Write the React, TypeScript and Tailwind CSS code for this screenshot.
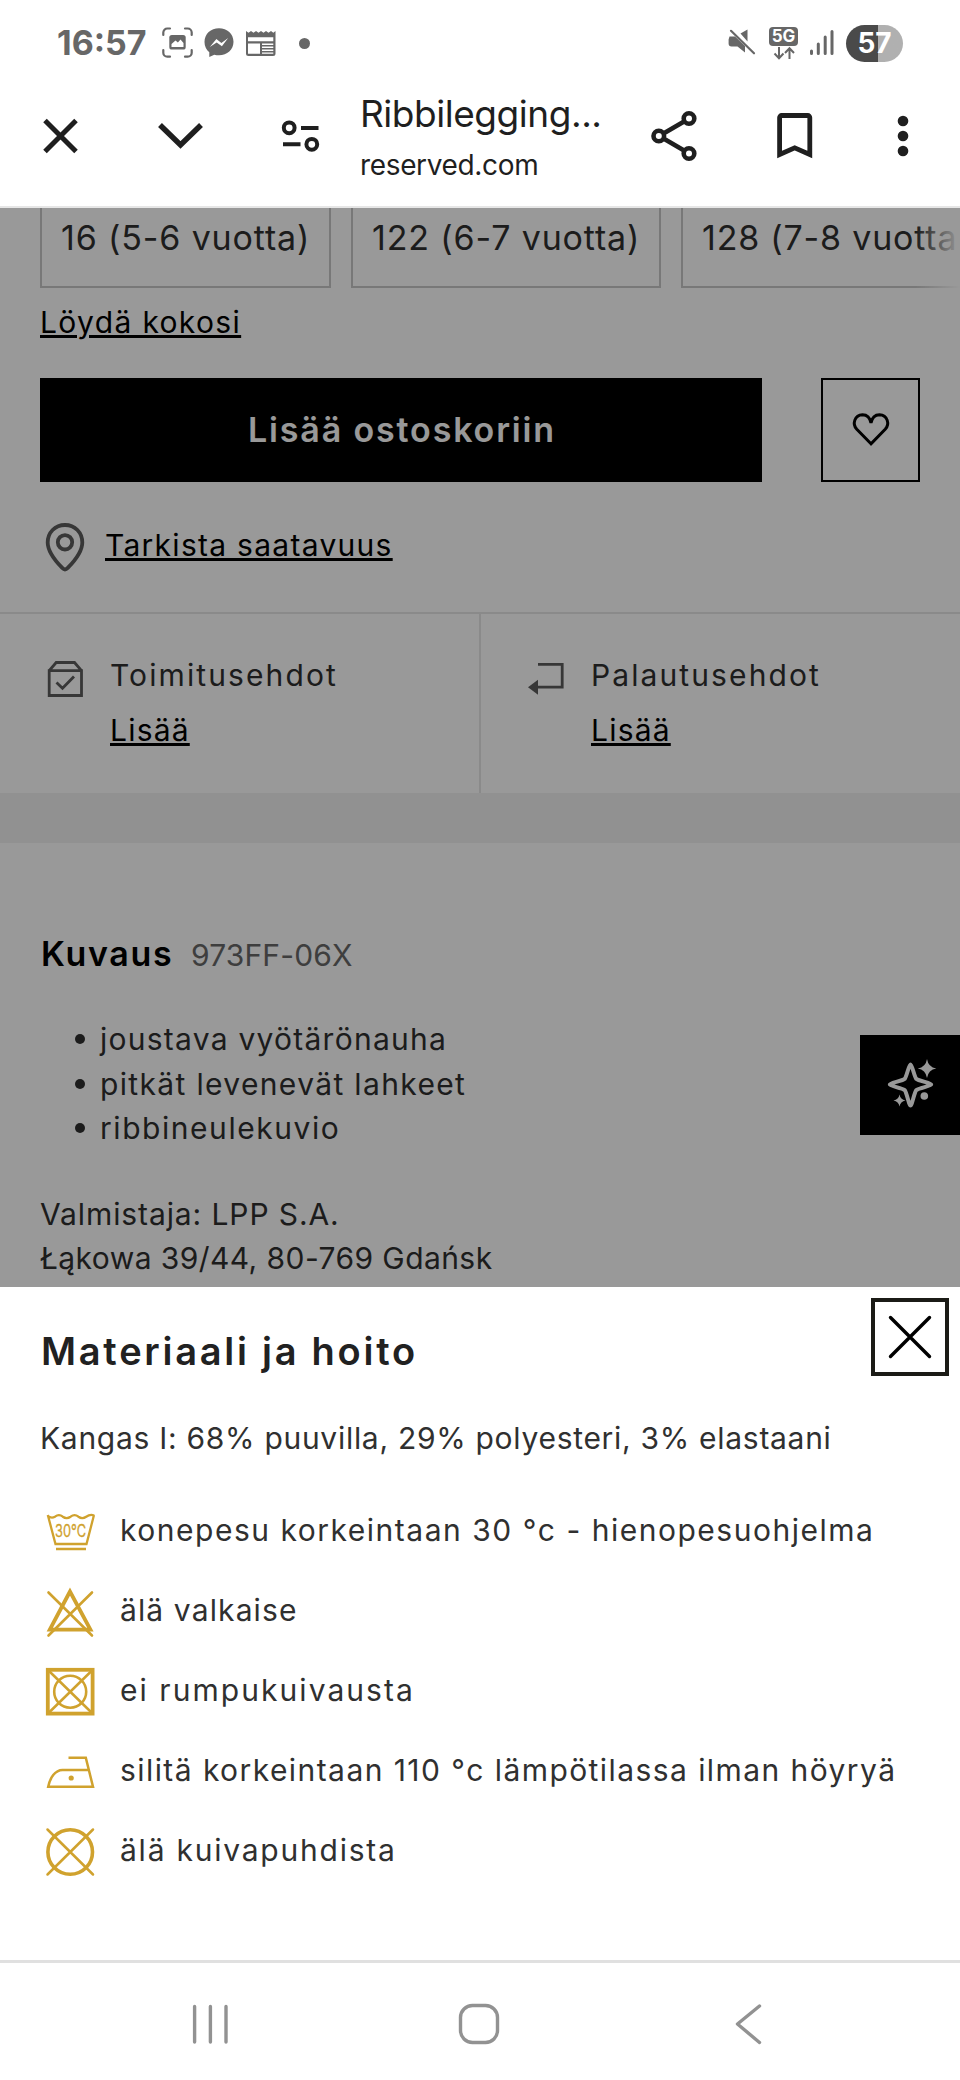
import type { ReactNode } from 'react'

type CareItem = {
  label: string
  tracking: string
  icon: ReactNode
}

function StatusBar() {
  return (
    <div className="flex h-[86px] items-center text-[#676767]">
      <span className="ml-[57px] w-[105px] text-[34px] leading-[36px] font-bold">16:57</span>

      <svg className="h-8 w-8" viewBox="0 0 32 32" fill="none">
        <g stroke="currentColor" strokeWidth="2.2" strokeLinecap="round">
          <path d="M1.3 8V5.5a4 4 0 0 1 4-4H8M23 1.5h2.7a4 4 0 0 1 4 4V8M29.7 23v2.7a4 4 0 0 1-4 4H23M8 29.7H5.3a4 4 0 0 1-4-4V23" />
        </g>
        <rect x="7.3" y="8" width="16.4" height="14.5" rx="2.6" fill="currentColor" />
        <path d="M9.5 20v-3l4-3.6 2.4 2.2 2.6-3.2 3 3.6v4z" fill="#fff" />
      </svg>

      <svg className="ml-[10px] h-8 w-8" viewBox="0 0 32 32">
        <path
          d="M15 1.3C6.8 1.3.5 7 .5 15c0 4.2 1.8 7.7 4.8 10.2V30l5-2.3c1.5.4 3.1.6 4.7.6 8.2 0 14.5-5.7 14.5-13.5S23.2 1.3 15 1.3z"
          fill="currentColor"
        />
        <path d="M5.8 20l6.600-8 5 3.900 6.800-4.800-6.300 8.200-5.200-3.900z" fill="#fff" />
      </svg>

      <svg className="ml-[10px] h-8 w-8" viewBox="0 0 32 32">
        <path
          d="M0 4l2.5 1.8L5 4l2.5 1.8L10 4l2.5 1.8L15 4l2.5 1.8L20 4l2.5 1.8L25 4l2.3 1.8L29.5 4v22.500a2.500 2.500 0 0 1-2.500 2.500H2.500A2.500 2.500 0 0 1 0 26.500z"
          fill="currentColor"
        />
        <path d="M2 10.300h25.300v4H2zM2 16.500h12v10.300H2zM16 16.500h11.300v1.500H16zM16 19.600h11.300v1.500H16zM16 22.600h11.300v1.500H16zM16 25.500h11.300v1.300H16z" fill="#fff" />
      </svg>

      <span className="ml-[21px] h-[11px] w-[11px] rounded-full bg-[#676767]" />

      <svg className="ml-[418px] h-8 w-8" viewBox="0 0 32 32">
        <path d="M1.5 9.5h5.5L17 19v6.5L9.500 19.500h-6A3 3 0 0 1 .6 16.500v-4zM12.500 6.500L19.500 2.500v12z" fill="currentColor" />
        <path d="M5 2.8l21 21" stroke="#fff" strokeWidth="2.5" />
        <path d="M3 3.8l23 22.5" stroke="currentColor" strokeWidth="2.2" strokeLinecap="round" />
      </svg>

      <div className="ml-[9px] flex w-[29px] flex-col items-center">
        <span className="h-[19px] w-[29px] rounded-[4px] bg-[#676767] text-center text-[17px] leading-[19px] font-bold text-white">
          5G
        </span>
        <svg className="h-[14px] w-[22px]" viewBox="0 0 22 14" fill="none" stroke="currentColor" strokeWidth="2">
          <path d="M6 1v11M1.5 7.5L6 12.200l4.500-4.700M16.500 13V2.500M12 7l4.500-4.700L21 7" />
        </svg>
      </div>

      <svg className="ml-[11px] h-8 w-[26px]" viewBox="0 0 26 32" stroke="currentColor" strokeWidth="3" strokeLinecap="round">
        <path d="M2.5 24v2.5M9.3 17v9.5M16.200 10v16.500M23 4.500v22" />
      </svg>

      <span className="ml-[11px] flex h-[37px] w-[57px] items-center justify-center rounded-full bg-linear-to-r from-[#4a4a4a] from-56% to-[#b0b0b0] to-56% text-[28px] leading-none font-bold text-white">
        57
      </span>
    </div>
  )
}

function Toolbar() {
  return (
    <div className="flex h-[122px] items-center border-b-2 border-[#e6e6e6] pb-5 text-[#1f1f1f]">
      <svg className="ml-[36px] h-12 w-12" viewBox="0 0 48 48" stroke="currentColor" strokeWidth="5">
        <path d="M9 8.5l31 31M40 8.5l-31 31" />
      </svg>
      <svg className="ml-[72px] h-12 w-12" viewBox="0 0 48 48" fill="none" stroke="currentColor" strokeWidth="5.5">
        <path d="M4 13l20.5 20L45 13" />
      </svg>
      <svg className="ml-[72px] h-12 w-12" viewBox="0 0 48 48" fill="none" stroke="currentColor" strokeWidth="4">
        <circle cx="13.2" cy="15.8" r="5.4" />
        <circle cx="35.8" cy="32.3" r="5.4" />
        <path d="M25 16h17.5M7 32.3h17.5" />
      </svg>
      <div className="ml-[36px] h-[92px] w-[260px]">
        <div className="text-[37px] leading-[48px] tracking-[-0.46px]">Ribbilegging...</div>
        <div className="mt-[10px] text-[28px] leading-[35px] tracking-[-0.35px]">reserved.com</div>
      </div>
      <svg className="ml-[30px] h-[52px] w-12" viewBox="0 0 48 52" fill="none" stroke="currentColor" strokeWidth="4.6">
        <circle cx="39" cy="8.5" r="5.3" />
        <circle cx="8.8" cy="26" r="5.3" />
        <circle cx="39" cy="43.5" r="5.3" />
        <path d="M13.5 23.4L34.5 11.2M13.5 28.6l21 12.2" />
      </svg>
      <svg className="ml-[73px] h-12 w-12" viewBox="0 0 48 48" fill="none" stroke="currentColor" strokeWidth="4.8">
        <path d="M8.6 42.5V5.5a2 2 0 0 1 2-2h26.2a2 2 0 0 1 2 2v37l-15.1-6.7z" />
      </svg>
      <svg className="ml-[60px] h-12 w-12" viewBox="0 0 48 48" fill="currentColor">
        <circle cx="24" cy="9" r="5.3" />
        <circle cx="24" cy="24" r="5.3" />
        <circle cx="24" cy="39" r="5.3" />
      </svg>
    </div>
  )
}

function ProductPage() {
  return (
    <main className="relative h-[1079px] overflow-hidden bg-white text-[30px] leading-[40px] text-[#303030]">
      <div className="relative flex gap-5 pl-10 text-[34px] leading-[60px] whitespace-nowrap">
        <div className="h-20 w-[291px] shrink-0 border-2 border-t-0 border-[#c9c9c9] pl-[19px] tracking-[0.85px]">16 (5-6 vuotta)</div>
        <div className="h-20 w-[310px] shrink-0 border-2 border-t-0 border-[#c9c9c9] pl-[19px] tracking-[0.85px]">122 (6-7 vuotta)</div>
        <div className="h-20 w-[279px] shrink-0 border-b-2 border-l-2 border-[#c9c9c9] pl-[19px] tracking-[0.8px]">128 (7-8 vuotta</div>
        <div className="absolute top-0 right-0 h-20 w-11 bg-linear-to-r from-transparent to-white" />
      </div>

      <a className="mt-[14px] ml-10 block w-fit tracking-[1.35px] text-black underline decoration-3 underline-offset-2">Löydä kokosi</a>

      <div className="mt-9 flex h-[104px] px-10">
        <button className="w-[722px] bg-black pl-[2px] text-[34px] font-semibold tracking-[1.85px] text-white">Lisää ostoskoriin</button>
        <button className="ml-[59px] flex w-[99px] items-center justify-center border-2 border-black">
          <svg className="h-[38px] w-10" viewBox="0 0 40 38" fill="none" stroke="#000" strokeWidth="3">
            <path d="M20 32.8L5.8 18.3C1 13 3.5 4 11.5 3.7c4.6 0 7.5 3 8.5 8.3 1-5.3 3.9-8.3 8.5-8.3 8 .3 10.500 9.300 5.700 14.600z" />
          </svg>
        </button>
      </div>

      <div className="flex h-[130px] items-center pl-[41px]">
        <svg className="h-[54px] w-12" viewBox="0 0 48 54" fill="none" stroke="#5c5c5c" strokeWidth="3.8">
          <path d="M24 49.500c-1.300 0-2-.8-3-1.800C13.500 40 6.700 31.500 6.700 22.500 6.700 12.500 14 5 24 5s17.300 7.500 17.300 17.500c0 9-6.800 17.500-14.300 25.200-1 1-1.700 1.800-3 1.800z" />
          <circle cx="24" cy="22.3" r="7.2" />
        </svg>
        <a className="mb-1 ml-4 tracking-[1.28px] text-black underline decoration-3 underline-offset-2">Tarkista saatavuus</a>
      </div>

      <div className="flex h-[181px] border-t-2 border-[#e6e6e6]">
        <div className="flex w-[481px] border-r-2 border-[#e6e6e6] pt-[41px] pl-[47px]">
          <svg className="mt-[6px] h-9 w-9" viewBox="0 0 36 36" fill="none" stroke="#5c5c5c" strokeWidth="2.8">
            <path d="M2.2 9.7h32.300v24.800H2.200zM2.200 9.700l7-8.200h18.300l7 8.200" />
            <path d="M9.5 21.5l6 5.8L27 15.5" />
          </svg>
          <div className="ml-[27px]">
            <div className="tracking-[2.1px]">Toimitusehdot</div>
            <a className="mt-[15px] block w-fit tracking-[1.2px] text-black underline decoration-3 underline-offset-2">Lisää</a>
          </div>
        </div>
        <div className="flex pt-[41px] pl-[47px]">
          <svg className="mt-[6px] h-9 w-9" viewBox="0 0 36 36" fill="none" stroke="#5c5c5c" strokeWidth="2.8">
            <path d="M10 3.3h24.2v22.9H9" />
            <path d="M0 26.200l10-7.500v15z" fill="#5c5c5c" stroke="none" />
          </svg>
          <div className="ml-[27px]">
            <div className="tracking-[2.1px]">Palautusehdot</div>
            <a className="mt-[15px] block w-fit tracking-[1.2px] text-black underline decoration-3 underline-offset-2">Lisää</a>
          </div>
        </div>
      </div>

      <div className="h-[50px] bg-[#f2f2f2]" />

      <div className="mt-[89px] flex items-baseline pl-[41px] leading-[44px]">
        <h2 className="w-[150px] text-[34px] font-semibold tracking-[1.68px] text-black">Kuvaus</h2>
        <span className="tracking-[0.15px] text-[#686868]">973FF-06X</span>
      </div>

      <ul className="mt-[40px] pl-[75px] leading-[44.5px]">
        <li className="flex items-center gap-[15px] tracking-[1.25px]">
          <span className="h-[10px] w-[10px] rounded-full bg-[#303030]" />
          joustava vyötärönauha
        </li>
        <li className="flex items-center gap-[15px] tracking-[1.35px]">
          <span className="h-[10px] w-[10px] rounded-full bg-[#303030]" />
          pitkät levenevät lahkeet
        </li>
        <li className="flex items-center gap-[15px] tracking-[1.55px]">
          <span className="h-[10px] w-[10px] rounded-full bg-[#303030]" />
          ribbineulekuvio
        </li>
      </ul>

      <div className="mt-[41px] pl-10 leading-[44.5px]">
        <p className="tracking-[0.9px]">Valmistaja: LPP S.A.</p>
        <p className="tracking-[0.43px]">Łąkowa 39/44, 80-769 Gdańsk</p>
      </div>

      <button className="absolute top-[827px] right-0 h-[100px] w-[100px] bg-black">
        <svg className="h-[100px] w-[100px]" viewBox="0 0 100 100" fill="#fff">
          <path
            d="M50.500 29.500c1.500 0 3.700 11.500 5.700 14.300 2.300 2.200 15 4.200 15 5.700s-12.700 3.500-15 5.700c-2 2.800-4.200 15.300-5.700 15.300s-3.700-12.500-5.700-15.300c-2.300-2.200-15-4.200-15-5.700s12.700-3.500 15-5.700c2-2.800 4.200-14.300 5.700-14.300z"
            fill="none"
            stroke="#fff"
            strokeWidth="4"
            strokeLinejoin="round"
          />
          <path d="M67 24q1.300 8.200 9.300 9.500-8 1.300-9.300 9.500-1.300-8.200-9.300-9.500 8-1.300 9.300-9.500z" />
          <path d="M39.500 59.500q.9 5 6 6-5.100 1-6 6-.9-5-6-6 5.100-1 6-6z" />
          <circle cx="64.3" cy="61" r="3.8" />
        </svg>
      </button>

      <div className="absolute inset-0 bg-black/40" />
    </main>
  )
}

const careItems: CareItem[] = [
  {
    label: 'konepesu korkeintaan 30 °c - hienopesuohjelma',
    tracking: 'tracking-[1.51px]',
    icon: (
      <g strokeWidth="2.3">
        <path d="M3.800 9L11.500 38h31L50 9M3.500 9.500q3.500 3.500 7.500 1.200 4-3.200 7.800 0 3.800 2.800 7.800 0 4-3.200 7.800 0 3.800 2.800 7.800 0 4-2.700 8-1.200M12 43h30" />
        <text
          x="11"
          y="30.5"
          fontSize="17"
          textLength="31"
          lengthAdjust="spacingAndGlyphs"
          fill="#d0a22e"
          stroke="#d0a22e"
          strokeWidth="0.3"
        >
          30°C
        </text>
      </g>
    ),
  },
  {
    label: 'älä valkaise',
    tracking: 'tracking-[1.12px]',
    icon: (
      <>
        <path d="M26 5.5L5.8 43.7h40.6z" strokeWidth="3.8" />
        <path d="M4.500 6.500l43.500 43M48 6.500l-43.500 43" strokeWidth="2.6" strokeLinecap="round" />
      </>
    ),
  },
  {
    label: 'ei rumpukuivausta',
    tracking: 'tracking-[2.05px]',
    icon: (
      <>
        <rect x="3.8" y="3.8" width="44.8" height="43.8" strokeWidth="3.8" />
        <circle cx="26.2" cy="25.7" r="16" strokeWidth="2.6" />
        <path d="M4 4l44.500 43.500M48.500 4L4 47.500" strokeWidth="2.5" />
      </>
    ),
  },
  {
    label: 'silitä korkeintaan 110 °c lämpötilassa ilman höyryä',
    tracking: 'tracking-[1.43px]',
    icon: (
      <>
        <path d="M24.500 11.800h17.300l7.200 28.900H4.200C6 32 11 24 18.500 24h26" strokeWidth="2.5" />
        <circle cx="27.2" cy="32" r="2.6" fill="#d0a22e" stroke="none" />
      </>
    ),
  },
  {
    label: 'älä kuivapuhdista',
    tracking: 'tracking-[1.77px]',
    icon: (
      <>
        <circle cx="26.2" cy="26" r="22.3" strokeWidth="3.6" />
        <path d="M3.500 3.500l45.500 45M49 3.500l-45.500 45" strokeWidth="2.5" strokeLinecap="round" />
      </>
    ),
  },
]

function MaterialSheet() {
  return (
    <section className="relative h-[673px] bg-white pt-10 pl-10 text-[30px] leading-[40px] text-[#303030]">
      <h2 className="pl-px text-[38px] leading-[48px] font-semibold tracking-[2.74px] text-[#212121]">Materiaali ja hoito</h2>
      <button className="absolute top-[11px] right-[11px] flex h-[78px] w-[78px] items-center justify-center border-4 border-[#1b1b16]">
        <svg className="h-11 w-11" viewBox="0 0 44 44" stroke="#000" strokeWidth="3.4" strokeLinecap="round">
          <path d="M2.5 2.5l39 39M41.5 2.5l-39 39" />
        </svg>
      </button>

      <p className="mt-[43px] tracking-[0.71px]">Kangas I: 68% puuvilla, 29% polyesteri, 3% elastaani</p>

      <ul className="mt-8 pl-1">
        {careItems.map(item => (
          <li key={item.label} className="flex h-20 items-center gap-6 whitespace-nowrap">
            <svg className="mt-1 h-[52px] w-[52px] shrink-0" viewBox="0 0 52 52" fill="none" stroke="#d0a22e">
              {item.icon}
            </svg>
            <span className={item.tracking}>{item.label}</span>
          </li>
        ))}
      </ul>
    </section>
  )
}

function NavigationBar() {
  return (
    <nav className="flex h-[120px] items-center gap-[221px] border-t-3 border-[#e0e0e0] pt-[5px] pl-[186px] text-[#929292]">
      <svg className="h-12 w-12" viewBox="0 0 48 48" stroke="currentColor" strokeWidth="3.4" strokeLinecap="round">
        <path d="M8.600 6.500v35.500M24.400 6.500v35.500M40 6.500v35.500" />
      </svg>
      <svg className="h-12 w-12" viewBox="0 0 48 48" fill="none" stroke="currentColor" strokeWidth="3.4">
        <rect x="5.5" y="5.5" width="37" height="37" rx="12" />
      </svg>
      <svg className="h-12 w-12" viewBox="0 0 48 48" fill="none" stroke="currentColor" strokeWidth="3.4" strokeLinecap="round" strokeLinejoin="round">
        <path d="M35.5 6L13.5 24l22 18.5" />
      </svg>
    </nav>
  )
}

export default function App() {
  return (
    <div className="h-[2080px] w-[960px] overflow-hidden bg-white font-['Inter',sans-serif]">
      <StatusBar />
      <Toolbar />
      <ProductPage />
      <MaterialSheet />
      <NavigationBar />
    </div>
  )
}
